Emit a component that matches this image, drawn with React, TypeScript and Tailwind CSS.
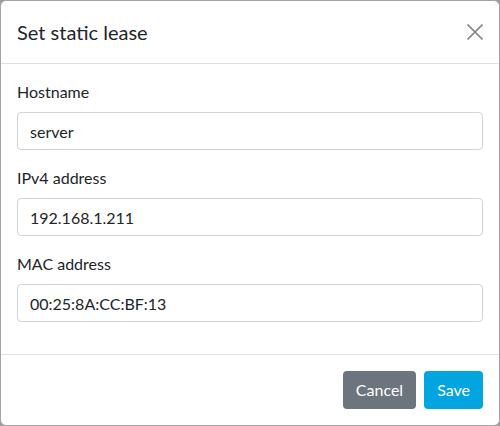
import { useState } from "react";

type Field = {
  label: string;
  value: string;
};

const initialFields: Field[] = [
  { label: "Hostname", value: "server" },
  { label: "IPv4 address", value: "192.168.1.211" },
  { label: "MAC address", value: "00:25:8A:CC:BF:13" },
];

export default function App() {
  const [fields, setFields] = useState(initialFields);

  const update = (i: number, value: string) =>
    setFields((prev) => prev.map((f, j) => (j === i ? { ...f, value } : f)));

  return (
    <div className="h-[426px] w-[500px] bg-[#9c9c9c] font-['Lato','Open_Sans',sans-serif] text-[#212529]">
      <div className="flex h-full flex-col rounded-[6px] border border-[#a3a3a3] bg-white">
        <div className="flex h-[63px] items-center justify-between border-b border-[#dee2e6] px-4">
          <h5 className="text-[20px] leading-[30px]">Set static lease</h5>
          <button className="flex h-4 w-4 items-center justify-center text-[#8a8a8a]" aria-label="Close">
            <svg width="16" height="16" viewBox="0 0 16 16" fill="none" stroke="currentColor" strokeWidth="1.7">
              <path d="M0.5 0.5 L15.5 15.5 M15.5 0.5 L0.5 15.5" />
            </svg>
          </button>
        </div>

        <div className="flex-1 p-4">
          {fields.map((f, i) => (
            <div key={f.label} className="mb-4">
              <label className="mb-2 block text-[16px] leading-6">{f.label}</label>
              <input
                value={f.value}
                onChange={(e) => update(i, e.target.value)}
                className="block h-[38px] w-full rounded border border-[#ced4da] px-3 text-[16px] text-[#212529] outline-none"
              />
            </div>
          ))}
        </div>

        <div className="flex justify-end border-t border-[#dee2e6] p-3">
          <div className="m-1 flex gap-2">
            <button className="h-[38px] rounded bg-[#6c757d] px-[13px] text-[16px] text-white">Cancel</button>
            <button className="h-[38px] rounded bg-[#03a5e0] px-[13px] text-[16px] text-white">Save</button>
          </div>
        </div>
      </div>
    </div>
  );
}
